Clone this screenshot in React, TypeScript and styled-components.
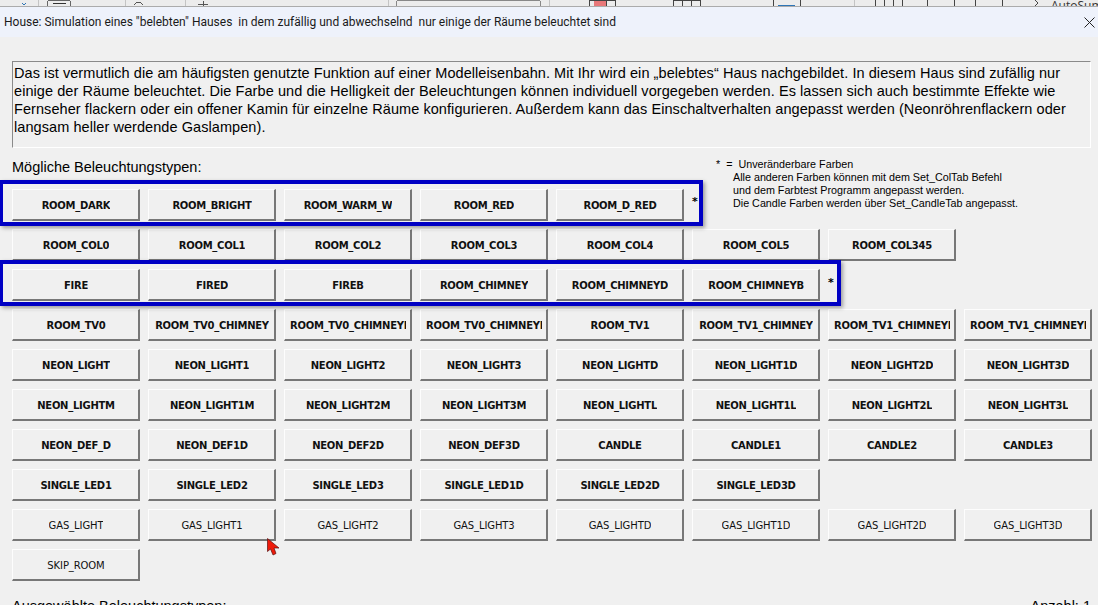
import React from "react";
import styled, { createGlobalStyle } from "styled-components";

const Global = createGlobalStyle`
  html, body { margin: 0; padding: 0; background: #f0f0f0; }
  #root { width: 1098px; height: 605px; overflow: hidden; }
`;

const Page = styled.div`
  width: 1098px;
  height: 605px;
  overflow: hidden;
  display: flex;
  flex-direction: column;
  position: relative;
  background: #f0f0f0;
  font-family: "DejaVu Sans", sans-serif;
  color: #000;
`;

const RibbonStrip = styled.div`
  height: 7px;
  flex: none;
  background: #ececec;
  border-bottom: 1px solid #ababab;
  box-sizing: border-box;
  position: relative;
  overflow: hidden;
  svg { display: block; }
`;

const AutoSum = styled.span`
  position: absolute;
  left: 1051px;
  top: -1px;
  font: 12px/14px "Open Sans", sans-serif;
  color: #333;
`;

const TitleBar = styled.div`
  height: 30px;
  flex: none;
  background: #eef2fb;
  display: flex;
  align-items: center;
  justify-content: space-between;
  padding: 0 3px 0 4px;
`;

const Title = styled.div`
  font: 12px "Roboto", sans-serif;
  color: #1a1a1a;
  white-space: pre;
  margin-top: -1px;
`;

const Body = styled.div`
  flex: 1;
  padding: 24px 7px 0 12px;
  position: relative;
`;

const Description = styled.div`
  box-sizing: border-box;
  height: 87px;
  border-style: solid;
  border-width: 1px;
  border-color: #8a8a8a #fff #fff #8a8a8a;
  padding: 2px 1px;
  font: 14.5px/18px "Liberation Sans", sans-serif;
  letter-spacing: 0.07px;
  white-space: pre;
`;

const ButtonGrid = styled.div`
  display: grid;
  grid-template-columns: repeat(8, 128px);
  grid-template-rows: 24px;
  grid-auto-rows: 32px;
  column-gap: 8px;
  row-gap: 8px;
  margin-top: 9px;
`;

const Heading = styled.div`
  grid-column: 1 / 6;
  font: 14.5px/20px "Liberation Sans", sans-serif;
`;

const Note = styled.div`
  grid-column: 6 / 9;
  grid-row: 1 / 3;
  margin-left: 24px;
  padding-top: 1px;
  font: 10.75px/13px "Liberation Sans", sans-serif;
  white-space: pre;
`;

const NoteIndent = styled.span`
  display: block;
  padding-left: 17px;
`;

const Star = styled.span<{ $col: number; $row: number; $top: number }>`
  grid-column: ${(p) => p.$col};
  grid-row: ${(p) => p.$row};
  font: bold 11px/14px "DejaVu Sans", sans-serif;
  padding-top: ${(p) => p.$top}px;
`;

const LightButton = styled.div<{ $plain?: boolean; $col?: number }>`
  box-sizing: border-box;
  height: 32px;
  ${(p) => (p.$col ? `grid-column: ${p.$col};` : "")}
  display: flex;
  align-items: center;
  justify-content: center;
  padding: 1px 4px 0 5px;
  border-style: solid;
  border-width: 1px 2px 2px 1px;
  border-color: #fdfdfd #777 #777 #fdfdfd;
  background: #f0f0f0;
  font: ${(p) => (p.$plain ? "400 10px" : "700 10px")} "DejaVu Sans", sans-serif;
  letter-spacing: ${(p) => (p.$plain ? "-0.1px" : "-0.27px")};
  color: #111;
`;

const Label = styled.span`
  display: block;
  max-width: 116px;
  overflow: hidden;
  white-space: nowrap;
  line-height: 17px;
`;

const Highlight = styled.div<{ $top: number; $width: number }>`
  position: absolute;
  left: 0;
  top: ${(p) => p.$top}px;
  width: ${(p) => p.$width}px;
  height: 46px;
  box-sizing: border-box;
  border: 4px solid #0000c4;
  border-left-width: 3px;
  box-shadow: 2px 2px 4px rgba(0, 0, 0, 0.35);
  pointer-events: none;
`;

const Cursor = styled.svg`
  position: absolute;
  left: 267px;
  top: 538px;
`;

const Footer = styled.div`
  display: flex;
  justify-content: space-between;
  margin-top: 16px;
  font: 14.5px/18px "Liberation Sans", sans-serif;
`;

const firstRow = ["ROOM_DARK", "ROOM_BRIGHT", "ROOM_WARM_W", "ROOM_RED", "ROOM_D_RED"];
const rows: string[][] = [
  ["ROOM_COL0", "ROOM_COL1", "ROOM_COL2", "ROOM_COL3", "ROOM_COL4", "ROOM_COL5", "ROOM_COL345"],
  ["FIRE", "FIRED", "FIREB", "ROOM_CHIMNEY", "ROOM_CHIMNEYD", "ROOM_CHIMNEYB"],
  ["ROOM_TV0", "ROOM_TV0_CHIMNEY", "ROOM_TV0_CHIMNEYD", "ROOM_TV0_CHIMNEYB", "ROOM_TV1", "ROOM_TV1_CHIMNEY", "ROOM_TV1_CHIMNEYD", "ROOM_TV1_CHIMNEYB"],
  ["NEON_LIGHT", "NEON_LIGHT1", "NEON_LIGHT2", "NEON_LIGHT3", "NEON_LIGHTD", "NEON_LIGHT1D", "NEON_LIGHT2D", "NEON_LIGHT3D"],
  ["NEON_LIGHTM", "NEON_LIGHT1M", "NEON_LIGHT2M", "NEON_LIGHT3M", "NEON_LIGHTL", "NEON_LIGHT1L", "NEON_LIGHT2L", "NEON_LIGHT3L"],
  ["NEON_DEF_D", "NEON_DEF1D", "NEON_DEF2D", "NEON_DEF3D", "CANDLE", "CANDLE1", "CANDLE2", "CANDLE3"],
  ["SINGLE_LED1", "SINGLE_LED2", "SINGLE_LED3", "SINGLE_LED1D", "SINGLE_LED2D", "SINGLE_LED3D"],
];
const plainRows: string[][] = [
  ["GAS_LIGHT", "GAS_LIGHT1", "GAS_LIGHT2", "GAS_LIGHT3", "GAS_LIGHTD", "GAS_LIGHT1D", "GAS_LIGHT2D", "GAS_LIGHT3D"],
  ["SKIP_ROOM"],
];

const description = `Das ist vermutlich die am häufigsten genutzte Funktion auf einer Modelleisenbahn. Mit Ihr wird ein „belebtes“ Haus nachgebildet. In diesem Haus sind zufällig nur
einige der Räume beleuchtet. Die Farbe und die Helligkeit der Beleuchtungen können individuell vorgegeben werden. Es lassen sich auch bestimmte Effekte wie
Fernseher flackern oder ein offener Kamin für einzelne Räume konfigurieren. Außerdem kann das Einschaltverhalten angepasst werden (Neonröhrenflackern oder
langsam heller werdende Gaslampen).`;

const RibbonDrawing = () => (
  <svg width="1098" height="6" fill="none" stroke="#444" strokeWidth="1" shapeRendering="crispEdges">
    <path d="M38.5 0v6M125.5 0v6M185.5 0v6M388.5 0v6M549.5 0v6M854.5 0v6" stroke="#c4c4c4" />
    <path d="M47.5 6V1.5l1-1h21l1 1V6" stroke="#666" />
    <path d="M53 3.5h13" stroke="#333" />
    <path d="M396.5 6V1.5l1-1h142l1 1V6" stroke="#888" />
    <path d="M594 0h12v6h-12z" fill="#e8787a" stroke="none" />
    <path d="M589.5 0v6M606.5 0v6M615.5 0v6M673.5 0v6M682.5 0v6M691.5 0v6M700.5 0v6M773.5 0v6M800.5 0v6M875.5 0v6M884.5 0v6M893.5 0v6M902.5 0v6M927.5 0v6M954.5 0v6M975.5 0v6M1002.5 0v6" />
    <path d="M589 0h27M673 0h27" />
    <path d="M778 5h17" stroke="#2e75b6" />
    <path d="M22 3l2 2 2-2" stroke="#2e75b6" />
    <path d="M134 5l3-3h3l3 3" stroke="#555" />
    <path d="M198 4h10M203 1v5" stroke="#555" />
    <path d="M1035 0l3 3-3 3" />
  </svg>
);

export default function App() {
  return (
    <Page>
      <Global />
      <RibbonStrip>
        <RibbonDrawing />
        <AutoSum>AutoSum</AutoSum>
      </RibbonStrip>
      <TitleBar>
        <Title>{'House: Simulation eines "belebten" Hauses  in dem zufällig und abwechselnd  nur einige der Räume beleuchtet sind'}</Title>
        <svg width="11" height="11" viewBox="0 0 11 11" stroke="#222" strokeWidth="1" fill="none">
          <path d="M0.5 0.5l10 10M10.5 0.5l-10 10" />
        </svg>
      </TitleBar>
      <Body>
        <Description>{description}</Description>
        <ButtonGrid>
          <Heading>Mögliche Beleuchtungstypen:</Heading>
          <Note>
            {"*  =  Unveränderbare Farben"}
            <NoteIndent>{"Alle anderen Farben können mit dem Set_ColTab Befehl\nund dem Farbtest Programm angepasst werden.\nDie Candle Farben werden über Set_CandleTab angepasst."}</NoteIndent>
          </Note>
          {firstRow.map((t, i) => (
            <LightButton key={t} $col={i + 1}><Label>{t}</Label></LightButton>
          ))}
          <Star $col={6} $row={2} $top={6}>*</Star>
          <Star $col={7} $row={4} $top={7}>*</Star>
          {rows.map((row) =>
            row.map((t, i) => (
              <LightButton key={t} $col={i + 1}><Label>{t}</Label></LightButton>
            ))
          )}
          {plainRows.map((row) =>
            row.map((t, i) => (
              <LightButton key={t} $plain $col={i + 1}><Label>{t}</Label></LightButton>
            ))
          )}
        </ButtonGrid>
        <Footer>
          <span>Ausgewählte Beleuchtungstypen:</span>
          <span>Anzahl: 1</span>
        </Footer>
        <Highlight $top={143} $width={703} />
        <Highlight $top={223} $width={841} />
      </Body>
      <Cursor width="13" height="18" viewBox="0 0 13 18">
        <path d="M0.5 0.5V13.5L3.5 11L6 17L9 15.5L7 10H12Z" fill="#ee1a0a" stroke="#5a1010" strokeWidth="0.7" />
      </Cursor>
    </Page>
  );
}
